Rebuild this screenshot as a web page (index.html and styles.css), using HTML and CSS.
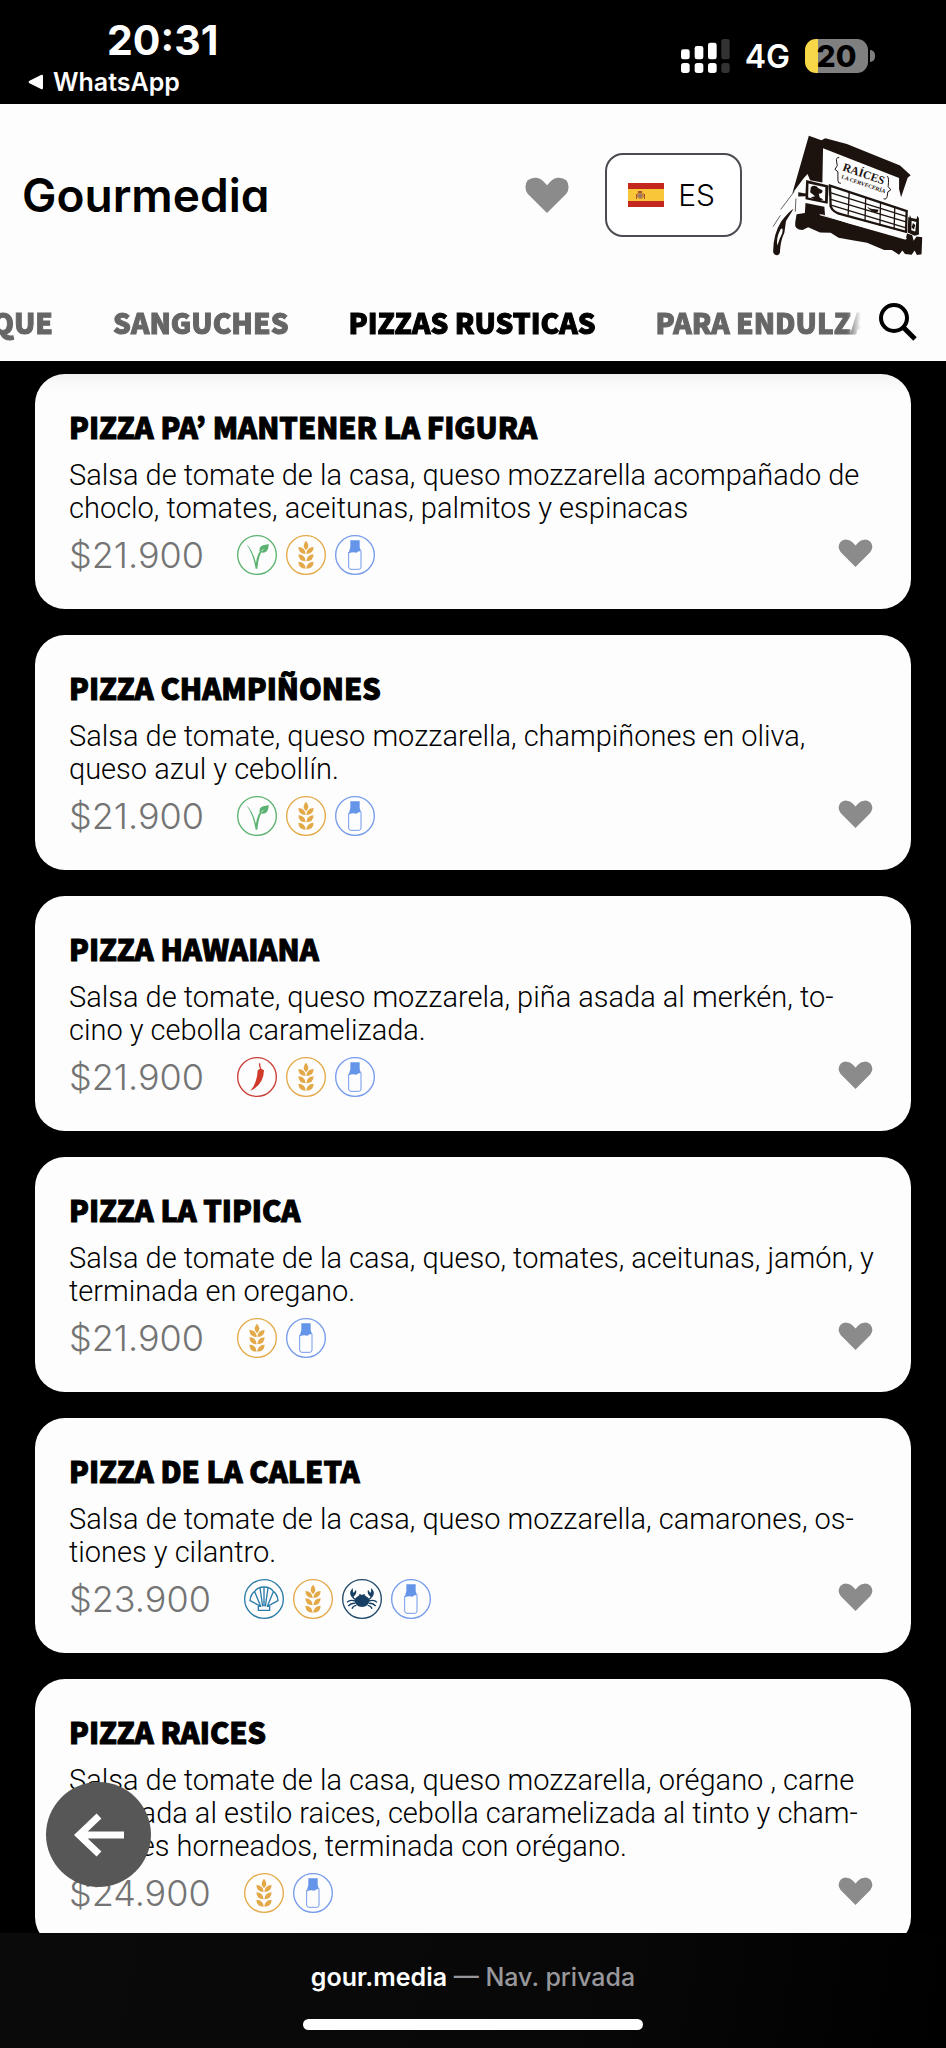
FILE: index.html
```html
<!DOCTYPE html>
<html lang="es">
<head>
<meta charset="utf-8">
<meta name="viewport" content="width=device-width, initial-scale=1">
<title>Gourmedia</title>
<link rel="stylesheet" href="styles.css">
</head>
<body>
<svg class="sprite" aria-hidden="true">
  <symbol id="heart" viewBox="0 0 136 108"><path d="M68 108 L10 50 A33 33 0 0 1 10 10 A34 34 0 0 1 57 13 L68 25 L79 13 A34 34 0 0 1 126 10 A33 33 0 0 1 126 50 Z"/></symbol>
  <symbol id="veg" viewBox="0 0 120 120">
    <circle cx="60" cy="60" r="58" fill="none" stroke="#5cb270" stroke-width="4"/>
    <path d="M28 28 Q46 42 57 84 Q60 58 72 46 L75 49 Q65 62 61 101 L56 101 Q48 54 28 28Z" fill="#5cb270"/>
    <path d="M68 51 Q65 35 78 31 Q87 30 95 27 Q95 44 87 50 Q79 55 72 52 L83 40Z" fill="#5cb270"/>
  </symbol>
  <symbol id="wheat" viewBox="0 0 120 120">
    <circle cx="60" cy="60" r="58" fill="none" stroke="#e3a948" stroke-width="4"/>
    <g fill="#e3a948">
      <path d="M60 17 Q74 32 60 46 Q46 32 60 17Z"/>
      <path d="M37 36 Q58 37 59 57 Q38 57 37 36Z M83 36 Q62 37 61 57 Q82 57 83 36Z"/>
      <path d="M37 58 Q58 59 59 79 Q38 79 37 58Z M83 58 Q62 59 61 79 Q82 79 83 58Z"/>
      <path d="M37 80 Q58 81 59 101 Q38 101 37 80Z M83 80 Q62 81 61 101 Q82 101 83 80Z"/>
    </g>
  </symbol>
  <symbol id="milk" viewBox="0 0 120 120">
    <circle cx="60" cy="60" r="58" fill="none" stroke="#759bea" stroke-width="4"/>
    <path d="M46 16 H74 V36 L78 48 Q70 47 64 53 Q53 50 41 55 L46 36Z" fill="#6495e9"/>
    <path d="M41 51 V96 Q41 103 48 103 H71 Q78 103 78 96 V47" fill="none" stroke="#759bea" stroke-width="3"/>
  </symbol>
  <symbol id="chili" viewBox="0 0 120 120">
    <circle cx="60" cy="60" r="58" fill="none" stroke="#c93c34" stroke-width="4"/>
    <path d="M66 19 H70 Q69 27 73 35 L81 40 Q80 83 40 102 Q60 79 62 40 L69 35 Q65 28 66 19Z" fill="#cf3a2b"/>
  </symbol>
  <symbol id="shell" viewBox="0 0 120 120">
    <g fill="none" stroke="#2b7ca8" stroke-width="4" stroke-linejoin="round">
      <circle cx="60" cy="60" r="58"/>
      <path d="M43 94 H77 V82 H70 L102 65 Q100 45 88 37 Q77 23 60 24 Q43 23 32 37 Q20 45 18 65 L50 82 H43Z"/>
      <path d="M50 82 L32 38 M56 82 L48 27 M60 82 V24 M64 82 L72 27 M70 82 L88 38"/>
    </g>
  </symbol>
  <symbol id="crab" viewBox="0 0 120 120">
    <circle cx="60" cy="60" r="58" fill="none" stroke="#21496b" stroke-width="4"/>
    <path d="M37 62 Q60 32 83 62 Q80 83 60 84 Q40 83 37 62Z" fill="#173f63"/>
    <path d="M28 53 Q18 40 33 27 Q31 35 35 42 L42 32 Q46 44 34 53Z M92 53 Q102 40 87 27 Q89 35 85 42 L78 32 Q74 44 86 53Z" fill="#173f63"/>
    <path d="M31 50 Q33 60 42 61 M89 50 Q87 60 78 61 M40 66 Q23 61 15 70 M80 66 Q97 61 105 70 M40 73 Q27 71 19 81 M80 73 Q93 71 101 81 M43 79 Q33 80 30 89 M77 79 Q87 80 90 89 M54 52 V45 M66 52 V45" fill="none" stroke="#173f63" stroke-width="4"/>
  </symbol>
</svg>

<div class="status">
  <div class="status-left">
    <time class="clock">20:31</time>
    <a class="return" href="#"><svg class="return-arrow" viewBox="0 0 16 16"><path d="M15 2 V14 Q15 16 13 15 L1 9 Q0 8 1 7 L13 1 Q15 0 15 2Z" fill="#fff"/></svg>WhatsApp</a>
  </div>
  <div class="status-right">
    <svg class="signal" viewBox="0 0 147 102" aria-label="Señal">
      <g fill="#fff"><rect y="31" width="26" height="30" rx="7"/><rect x="41" y="21" width="26" height="40" rx="7"/><rect x="81" y="11" width="26" height="50" rx="7"/><rect y="72" width="26" height="30" rx="8"/><rect x="41" y="72" width="26" height="30" rx="8"/><rect x="81" y="72" width="26" height="30" rx="8"/></g>
      <g fill="#333"><rect x="121" width="25" height="61" rx="7"/><rect x="121" y="72" width="25" height="30" rx="8"/></g>
    </svg>
    <span class="network">4G</span>
    <span class="battery"><span class="battery-body">20</span><span class="battery-tip"></span></span>
  </div>
</div>

<header class="header">
  <div class="brand-row">
    <a class="wordmark" href="#">Gourmedia</a>
    <button class="icon-button" aria-label="Favoritos"><svg class="heart-large"><use href="#heart"/></svg></button>
    <button class="language">
      <svg class="flag" viewBox="0 0 36 24"><path fill="#c3271d" d="M0 0h36v24H0z"/><path fill="#f8c638" d="M0 6h36v12H0z"/><path fill="#c98a3a" d="M9 10h7v4q-3 4-7 0z"/><path fill="#a5552f" d="M10 8h4v2h-4zM8 11h1v5H8zM16 11h1v5h-1z"/><circle cx="12" cy="13" r="2" fill="#927a72"/></svg>
      ES
    </button>
    <svg class="logo" viewBox="36 40 456 366" role="img" aria-label="Raíces La Cervecería">
      <g fill="#1c120e">
        <path d="M147 42 L185 56 L197 50 L262 67 L423 132 L455 162 L446 169 L426 228 L420 203 V170 L190 80 L188 184 L151 177 L143 158 L132 170 L97 217Z"/>
        <path d="M139 176 L207 193 L204 248 L137 234 V225 L115 226 V213 L137 217Z"/>
        <path d="M137 246 L194 257 L196 282 L180 279 L265 307 L440 357 L444 338 L460 343 L464 360 L473 347 L490 349 L488 401 L474 403 L467 389 L458 402 L438 400 L430 389 L420 402 L398 388 L375 388 L323 366 L279 358 L237 351 L213 336 L181 335 L145 319 L128 327 Q102 327 106 304 L110 280 L135 276Z"/>
        <path d="M101 263 Q87 271 64 301 Q39 340 39 393 Q41 403 51 404 Q61 402 60 388 Q62 359 73 336 L78 300Z"/>
        <path d="M448 287 L452 290 V282 L457 291 L473 294 L475 284 L480 292 L480 341 L467 345 L446 335Z"/>
      </g>
      <path d="M146 187 L197 198 L196 240 L145 229Z" fill="#fdfdfd"/>
      <path d="M153 198 Q165 188 176 201 L188 207 Q191 216 177 218 L180 229 L191 235 Q170 242 153 228 L166 225 L151 213Z" fill="#1c120e"/>
      <path d="M211 193 L443 270 L441 333 L249 281 Q220 275 213 256Z" fill="#fdfdfd" stroke="#1c120e" stroke-width="7"/>
      <g fill="none" stroke="#1c120e" stroke-width="4">
        <path d="M214 215 L441 286 M214 235 L441 303 M214 252 L441 321 M269 213 L266 281 M319 229 L317 301 M364 243 L362 315 M407 257 L405 325"/>
        <path d="M103 211 L62 265 M61 283 L39 317 M108 232 L106 272" stroke-width="2"/>
      </g>
      <path d="M323 257 L335 263 L358 266 L355 274 Q336 275 323 257Z" fill="#1c120e"/>
      <path d="M458 299 L472 303 L469 332 L457 328Z" fill="#fdfdfd"/>
      <path d="M462 306 L469 312 L465 326 L458 320Z" fill="#1c120e"/>
      <path d="M62 324 Q71 318 66 339 Q57 356 52 374 Q47 352 62 324Z" fill="#fdfdfd"/>
      <path d="M180 281 L325 321 L443 353" fill="none" stroke="#fdfdfd" stroke-width="3"/>
      <path d="M239 108 Q228 108 231 119 L233 133 L226 144 L235 151 L235 178 Q235 187 244 186 M383 164 Q389 166 388 183 L387 196 L395 206 L386 212 L384 226 Q382 236 373 233" fill="none" stroke="#1c120e" stroke-width="3"/>
      <g class="logo-text" fill="#1c120e"><text transform="translate(247 147) rotate(19)" font-size="35">RAÍCES</text><text transform="translate(244 171) rotate(19)" font-size="17">LA CERVECERÍA</text></g>
    </svg>
  </div>
  <div class="nav-row">
    <nav class="tabs" aria-label="Categorías">
      <a class="tab" href="#">QUE</a>
      <a class="tab" href="#">SANGUCHES</a>
      <a class="tab tab-active" href="#" aria-current="page">PIZZAS RUSTICAS</a>
      <a class="tab" href="#">PARA ENDULZAR</a>
    </nav>
    <button class="icon-button" aria-label="Buscar"><svg class="search" viewBox="0 0 38 38" fill="none" stroke="#000" stroke-width="4"><circle cx="15" cy="15" r="13"/><path d="M24 24 L36 36" stroke-width="5"/></svg></button>
  </div>
</header>

<main class="menu">
  <div class="cards">
    <article class="card">
      <h2 class="title">PIZZA PA’ MANTENER LA FIGURA</h2>
      <p class="description">Salsa de tomate de la casa, queso mozzarella acompañado de choclo, tomates, aceitunas, palmitos y espinacas</p>
      <div class="meta"><span class="price">$21.900</span><span class="tags"><svg class="tag"><use href="#veg"/></svg><svg class="tag"><use href="#wheat"/></svg><svg class="tag"><use href="#milk"/></svg></span><button class="icon-button like" aria-label="Me gusta"><svg class="heart"><use href="#heart"/></svg></button></div>
    </article>
    <article class="card">
      <h2 class="title">PIZZA CHAMPIÑONES</h2>
      <p class="description">Salsa de tomate, queso mozzarella, champiñones en oliva, queso azul y cebollín.</p>
      <div class="meta"><span class="price">$21.900</span><span class="tags"><svg class="tag"><use href="#veg"/></svg><svg class="tag"><use href="#wheat"/></svg><svg class="tag"><use href="#milk"/></svg></span><button class="icon-button like" aria-label="Me gusta"><svg class="heart"><use href="#heart"/></svg></button></div>
    </article>
    <article class="card">
      <h2 class="title">PIZZA HAWAIANA</h2>
      <p class="description">Salsa de tomate, queso mozzarela, piña asada al merkén, to&shy;cino y cebolla caramelizada.</p>
      <div class="meta"><span class="price">$21.900</span><span class="tags"><svg class="tag"><use href="#chili"/></svg><svg class="tag"><use href="#wheat"/></svg><svg class="tag"><use href="#milk"/></svg></span><button class="icon-button like" aria-label="Me gusta"><svg class="heart"><use href="#heart"/></svg></button></div>
    </article>
    <article class="card">
      <h2 class="title">PIZZA LA TIPICA</h2>
      <p class="description">Salsa de tomate de la casa, queso, tomates, aceitunas, jamón, y terminada en oregano.</p>
      <div class="meta"><span class="price">$21.900</span><span class="tags"><svg class="tag"><use href="#wheat"/></svg><svg class="tag"><use href="#milk"/></svg></span><button class="icon-button like" aria-label="Me gusta"><svg class="heart"><use href="#heart"/></svg></button></div>
    </article>
    <article class="card">
      <h2 class="title">PIZZA DE LA CALETA</h2>
      <p class="description">Salsa de tomate de la casa, queso mozzarella, camarones, os&shy;tiones y cilantro.</p>
      <div class="meta"><span class="price">$23.900</span><span class="tags"><svg class="tag"><use href="#shell"/></svg><svg class="tag"><use href="#wheat"/></svg><svg class="tag"><use href="#crab"/></svg><svg class="tag"><use href="#milk"/></svg></span><button class="icon-button like" aria-label="Me gusta"><svg class="heart"><use href="#heart"/></svg></button></div>
    </article>
    <article class="card">
      <h2 class="title">PIZZA RAICES</h2>
      <p class="description">Salsa de tomate de la casa, queso mozzarella, orégano , carne mechada al estilo raices, cebolla caramelizada al tinto y cham&shy;piñones horneados, terminada con orégano.</p>
      <div class="meta"><span class="price">$24.900</span><span class="tags"><svg class="tag"><use href="#wheat"/></svg><svg class="tag"><use href="#milk"/></svg></span><button class="icon-button like" aria-label="Me gusta"><svg class="heart"><use href="#heart"/></svg></button></div>
    </article>
  </div>
  <button class="back" aria-label="Volver"><svg class="back-arrow" viewBox="0 0 50 44" fill="none" stroke="#fff" stroke-width="7"><path d="M50 22 H6 M25 3 L5 22 L25 41"/></svg></button>
</main>

<footer class="browser-bar">
  <p class="address"><span class="domain">gour.media</span> — Nav. privada</p>
  <div class="home-indicator"></div>
</footer>
</body>
</html>
```
FILE: styles.css
```css
* { box-sizing: border-box; }

body {
  margin: 0;
  height: 100vh;
  display: flex;
  flex-direction: column;
  background: #000;
  color: #000;
  font-family: Inter, "Liberation Sans", sans-serif;
}

button {
  font: inherit;
  color: inherit;
  cursor: pointer;
}

a { color: inherit; text-decoration: none; }
svg { display: block; }
.sprite { position: absolute; width: 0; height: 0; }

.icon-button {
  padding: 0;
  border: 0;
  background: none;
}

/* System status */
.status {
  flex: none;
  height: 104px;
  padding: 16px 71px 0 28px;
  display: flex;
  justify-content: space-between;
  color: #fff;
}

.status-left { display: flex; flex-direction: column; }

.clock {
  margin-left: 79px;
  font-size: 41px;
  line-height: 48px;
  font-weight: 700;
}

.return {
  display: flex;
  align-items: center;
  gap: 9px;
  font-size: 25px;
  line-height: 36px;
  font-weight: 600;
}

.return-arrow { width: 16px; height: 16px; }

.status-right {
  height: 80px;
  display: flex;
  align-items: center;
  gap: 15px;
}

.signal { width: 49px; height: 34px; }
.network { font-size: 32px; font-weight: 600; }
.battery { display: flex; align-items: center; gap: 2px; }

.battery-body {
  width: 63px;
  height: 34px;
  border-radius: 11px;
  background: linear-gradient(90deg, #f8d748 13px, #808080 13px);
  color: #000;
  font-size: 30px;
  line-height: 34px;
  font-weight: 800;
  text-align: center;
}

.battery-tip {
  width: 5px;
  height: 12px;
  border-radius: 0 6px 6px 0;
  background: #808080;
}

/* Header */
.header {
  flex: none;
  position: relative;
  z-index: 1;
  background: #fdfdfd;
  box-shadow: 0 4px 26px rgba(0, 0, 0, 0.2);
}

.brand-row {
  height: 182px;
  padding: 0 23px 0 22px;
  display: flex;
  align-items: center;
}

.wordmark {
  margin-right: auto;
  font-size: 46px;
  font-weight: 600;
  font-feature-settings: "cv11";
}

.heart-large { width: 46px; height: 36px; fill: #8b8b8b; }

.language {
  height: 84px;
  margin: 0 30px 0 35px;
  padding: 0 25px 0 21px;
  display: flex;
  align-items: center;
  gap: 14px;
  border: 2px solid #4b4b52;
  border-radius: 18px;
  background: #fff;
  font-size: 30px;
  font-weight: 300;
}

.flag { width: 36px; height: 24px; }
.logo { width: 151px; height: 121px; }

.logo-text {
  font-family: "Liberation Serif", serif;
  font-weight: 700;
}

.nav-row {
  height: 75px;
  padding: 0 29px 3px 0;
  display: flex;
  align-items: center;
  gap: 18px;
}

.tabs {
  flex: 1;
  min-width: 0;
  margin-left: -8px;
  display: flex;
  gap: 60px;
  overflow: hidden;
  white-space: nowrap;
  mask-image: linear-gradient(90deg, #000 calc(100% - 14px), transparent);
}

.tab, .title {
  font-family: "Noto Sans CJK KR", "Liberation Sans", sans-serif;
  font-weight: 900;
  -webkit-text-stroke: 1px currentColor;
}

.tab {
  color: #666;
  font-size: 28px;
  line-height: 40px;
}

.tab-active { color: #000; }
.search { width: 38px; height: 38px; }

/* Menu */
.menu {
  flex: 1;
  min-height: 0;
  position: relative;
  overflow: hidden;
}

.cards {
  padding: 13px 35px 0;
  display: flex;
  flex-direction: column;
  gap: 26px;
}

.card {
  padding: 32px 36px 24px 34px;
  border-radius: 30px;
  background: #fdfdfd;
}

.title {
  margin: 0 0 13px;
  font-size: 29px;
  line-height: 40px;
}

.description {
  margin: 0;
  font-family: Roboto, Inter, sans-serif;
  font-size: 29px;
  line-height: 33px;
  font-weight: 350;
}

.meta {
  height: 60px;
  padding-right: 2px;
  display: flex;
  align-items: center;
}

.price {
  color: #747474;
  font-size: 36px;
  font-weight: 300;
}

.tags {
  margin-left: 33px;
  display: flex;
  gap: 9px;
}

.tag { width: 40px; height: 40px; }
.like { margin: 0 0 4px auto; }
.heart { width: 35px; height: 28px; fill: #8b8b8b; }

.back {
  position: absolute;
  left: 46px;
  bottom: 46px;
  width: 105px;
  height: 105px;
  padding: 0;
  display: grid;
  place-items: center;
  border: 0;
  border-radius: 50%;
  background: #575757;
}

.back-arrow { width: 50px; height: 44px; }

/* Browser bar */
.browser-bar {
  flex: none;
  height: 115px;
  padding: 28px 0 18px;
  display: flex;
  flex-direction: column;
  align-items: center;
  justify-content: space-between;
  background: linear-gradient(100deg, #0a0a0a, #080808 60%, #000);
}

.address {
  margin: 0;
  color: #98989c;
  font-size: 25px;
  line-height: 32px;
  font-weight: 500;
}

.domain { color: #fff; font-weight: 600; }

.home-indicator {
  width: 36%;
  height: 11px;
  border-radius: 6px;
  background: #fff;
}
```
